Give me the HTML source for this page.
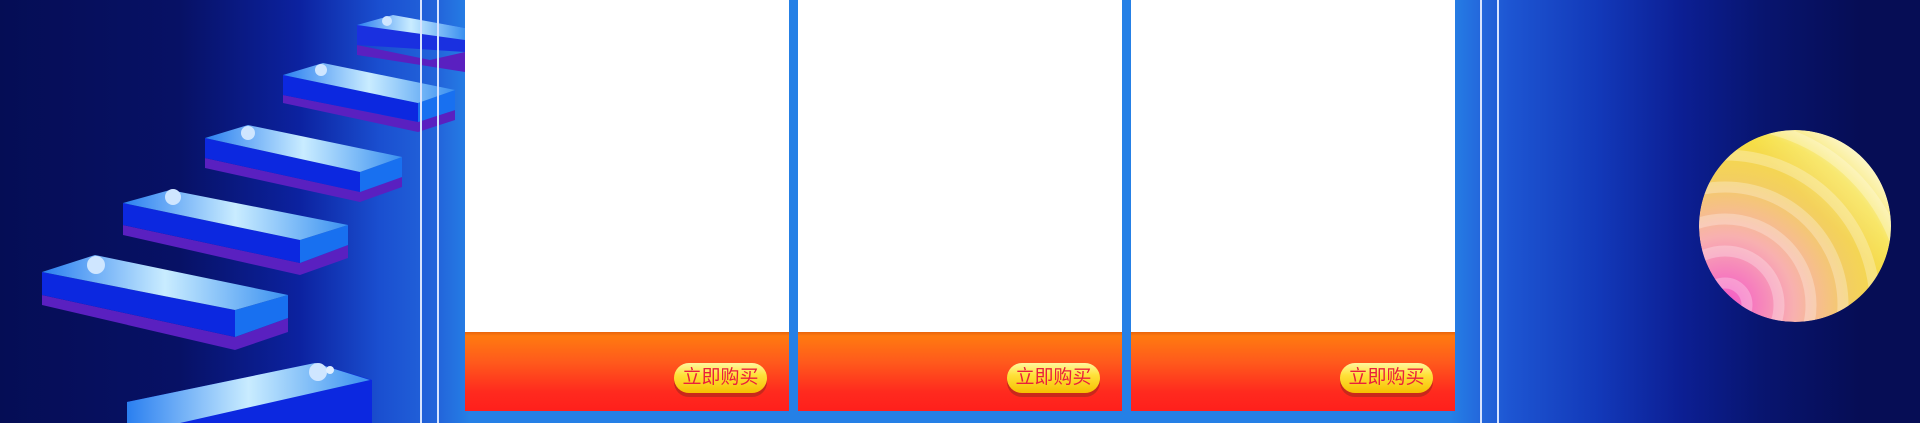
<!DOCTYPE html>
<html><head><meta charset="utf-8"><style>
html,body{margin:0;padding:0;overflow:hidden;width:1920px;height:423px}
body{position:relative;
background:linear-gradient(90deg,#050d55 0px,#071165 180px,#0c22a0 300px,#1a4fd0 380px,#2366db 440px,#2580e6 470px,#2580e6 1450px,#2468dc 1480px,#1d55d2 1510px,#1238b8 1600px,#0c1f94 1680px,#081570 1760px,#060d55 1860px);
font-family:"Liberation Sans","Noto Sans CJK SC",sans-serif}
svg{display:block}
.l{position:absolute;top:0;height:423px;width:2px;background:#d8e4ff}
.p{position:absolute;top:0;height:411px;width:324px;background:#fff}
.o{position:absolute;left:0;right:0;top:332px;bottom:0;background:linear-gradient(#e8640c 0,#ff7a10 4px,#ff5a1c 30px,#ff2a1e 60px,#ff1f1c 79px)}
.b{position:absolute;left:209px;top:31px;width:93px;height:30px;border-radius:15px;
background:linear-gradient(#fff7a0 0,#ffe13a 40%,#f6c000 100%);box-shadow:0 4px 0 #c8281c;
color:#ea1f3c;font-size:19px;line-height:30px;text-align:center}
</style></head><body>
<svg width="1920" height="423" style="position:absolute;left:0;top:0">
<defs>
<linearGradient id="t" x1="0" y1="0" x2="1" y2="0"><stop offset="0" stop-color="#2a7ff0"/><stop offset=".5" stop-color="#c9ecff"/><stop offset="1" stop-color="#3a90f0"/></linearGradient>
<radialGradient id="ball" cx="1725" cy="305" r="230" gradientUnits="userSpaceOnUse"><stop offset="0" stop-color="#f455c8"/><stop offset=".3" stop-color="#f8b0b0"/><stop offset=".55" stop-color="#f3cf60"/><stop offset=".75" stop-color="#f6e040"/><stop offset="1" stop-color="#fffbe8"/></radialGradient>
<linearGradient id="sh" x1="1" y1="0" x2="0" y2="1"><stop offset="0" stop-color="#fff" stop-opacity=".7"/><stop offset=".4" stop-color="#fff" stop-opacity="0"/></linearGradient>
<clipPath id="bc"><circle cx="1795" cy="226" r="96"/></clipPath>
</defs>
<g>
<polygon points="357,45 430,60 465,52 465,72 357,55" fill="#5a20c0"/>
<polygon points="357,25 393,15 465,28 465,52 357,45" fill="#1a30e0"/>
<polygon points="357,25 393,15 465,28 465,40" fill="url(#t)"/>
<circle cx="387" cy="21" r="5" fill="#cfe6ff"/>
<polygon points="283,95 418,122 455,110 455,120 418,132 283,103" fill="#5a20c0"/>
<polygon points="283,75 418,103 418,122 283,95" fill="#0c28e0"/>
<polygon points="418,103 455,90 455,110 418,122" fill="#1870f0"/>
<polygon points="283,75 323,63 455,90 418,103" fill="url(#t)"/>
<circle cx="321" cy="70" r="6" fill="#cfe6ff"/>
<polygon points="205,158 360,192 402,177 402,187 360,202 205,168" fill="#5a20c0"/>
<polygon points="205,138 360,172 360,192 205,158" fill="#0c28e0"/>
<polygon points="360,172 402,157 402,177 360,192" fill="#1870f0"/>
<polygon points="205,138 248,125 402,157 360,172" fill="url(#t)"/>
<circle cx="248" cy="133" r="7" fill="#cfe6ff"/>
<polygon points="123,225 300,263 348,245 348,258 300,275 123,235" fill="#5a20c0"/>
<polygon points="123,203 300,240 300,263 123,225" fill="#0c28e0"/>
<polygon points="300,240 348,225 348,245 300,263" fill="#1870f0"/>
<polygon points="123,203 170,190 348,225 300,240" fill="url(#t)"/>
<circle cx="173" cy="197" r="8" fill="#cfe6ff"/>
<polygon points="42,295 235,337 288,318 288,332 235,350 42,305" fill="#5a20c0"/>
<polygon points="42,272 235,310 235,337 42,295" fill="#0c28e0"/>
<polygon points="235,310 288,295 288,318 235,337" fill="#1870f0"/>
<polygon points="42,272 95,255 288,295 235,310" fill="url(#t)"/>
<circle cx="96" cy="265" r="9" fill="#cfe6ff"/>
<polygon points="127,402 315,363 372,380 372,423 127,423" fill="#0c28e0"/>
<polygon points="127,402 315,363 370,380 180,423 127,423" fill="url(#t)"/>
<circle cx="318" cy="372" r="9" fill="#cfe6ff"/>
<circle cx="330" cy="370" r="4" fill="#e0efff"/>
</g>
<g clip-path="url(#bc)">
<circle cx="1795" cy="226" r="96" fill="url(#ball)"/>
<g fill="none" stroke="#fff" stroke-opacity=".28" stroke-width="11">
<circle cx="1725" cy="305" r="22"/><circle cx="1725" cy="305" r="54"/><circle cx="1725" cy="305" r="86"/><circle cx="1725" cy="305" r="118"/><circle cx="1725" cy="305" r="150"/><circle cx="1725" cy="305" r="182"/><circle cx="1725" cy="305" r="214"/>
</g>
<circle cx="1795" cy="226" r="96" fill="url(#sh)"/>
</g>
</svg>
<div class="l" style="left:420px"></div>
<div class="l" style="left:437px"></div>
<div class="l" style="left:1480px"></div>
<div class="l" style="left:1497px"></div>
<div class="p" style="left:465px"><div class="o"><div class="b">立即购买</div></div></div>
<div class="p" style="left:798px"><div class="o"><div class="b">立即购买</div></div></div>
<div class="p" style="left:1131px"><div class="o"><div class="b">立即购买</div></div></div>
</body></html>
